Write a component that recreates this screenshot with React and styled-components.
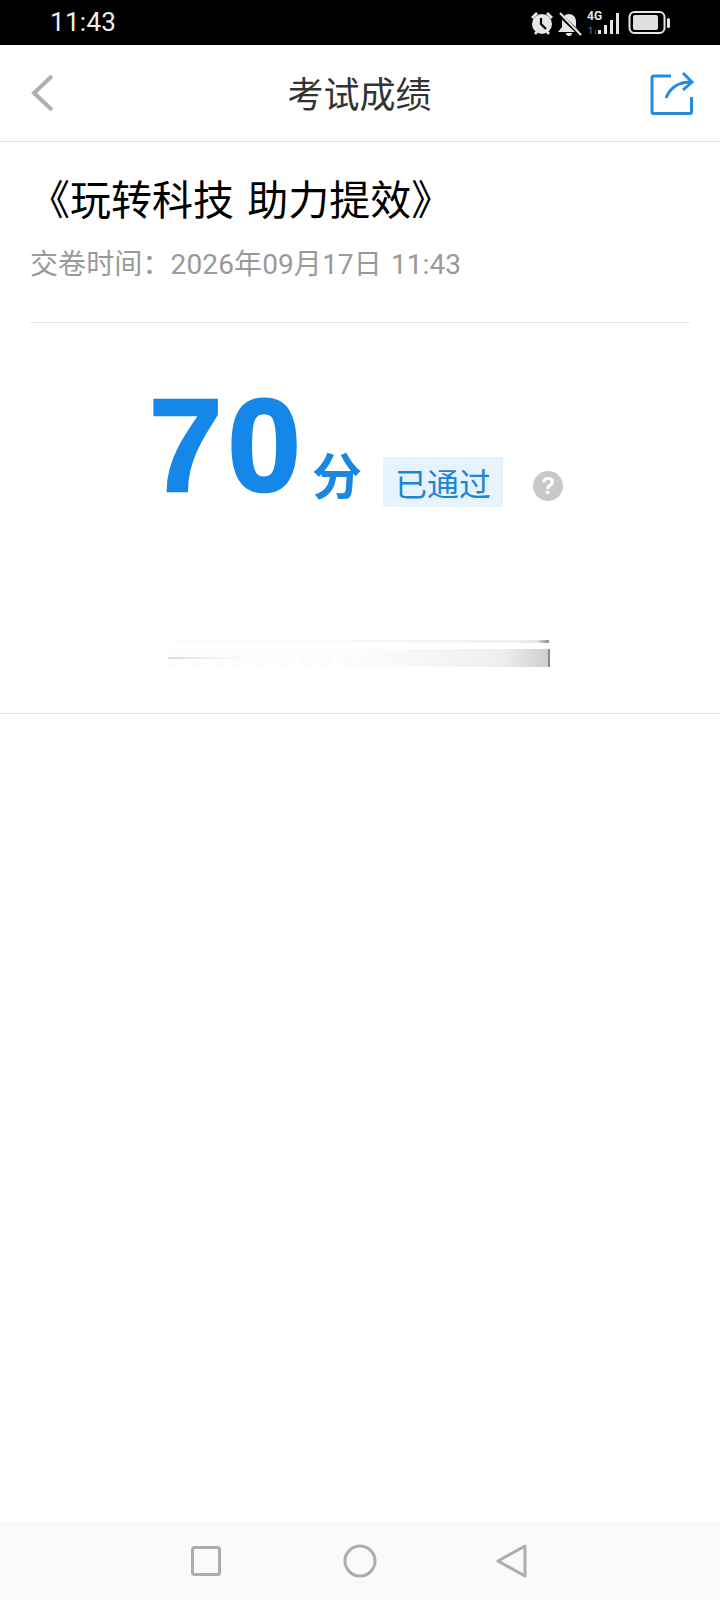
import React from "react";
import styled, { createGlobalStyle } from "styled-components";

const Global = createGlobalStyle`
  html, body { margin: 0; padding: 0; background: #fff; }
  body { font-family: "Noto Sans CJK SC", "Noto Sans", sans-serif; }
`;
const Page = styled.div`
  width: 720px; height: 1600px; display: flex; flex-direction: column; background: #fff; overflow: hidden;
`;
const StatusBar = styled.div`
  height: 45px; flex: none; background: #000; display: flex; align-items: center; justify-content: space-between;
  padding: 0 50px 0 50px; box-sizing: border-box;
`;
const Clock = styled.span`
  font: 400 26px/45px Roboto, sans-serif; color: #eee; letter-spacing: 0.3px; margin-top: -1px;
`;
const NavBar = styled.header`
  height: 97px; flex: none; box-sizing: border-box; border-bottom: 1px solid #e2e2e2;
  display: flex; align-items: center; justify-content: space-between; padding: 0 26px 0 29px;
`;
const NavTitle = styled.h1`
  margin: -2px 0 0 14px; font-size: 36px; line-height: 50px; font-weight: 400; color: #333;
`;
const Info = styled.section`
  margin: 0 30px; height: 181px; box-sizing: border-box; border-bottom: 1px solid #e6e6e6; flex: none; padding-top: 26px;
`;
const ExamTitle = styled.h2`
  margin: 0 0 0 -1px; font-size: 41px; line-height: 58px; font-weight: 400; color: #000; white-space: pre; word-spacing: 4px;
`;
const Submitted = styled.p`
  margin: 19px 0 0; font-size: 28px; line-height: 40px; color: #999; font-family: Roboto, "Noto Sans CJK SC", sans-serif;
  white-space: pre; letter-spacing: 0.12px; word-spacing: 2px;
`;
const ScoreArea = styled.section`
  height: 391px; flex: none; box-sizing: border-box; border-bottom: 1px solid #e2e2e2;
  display: flex; flex-direction: column;
`;
const ScoreRow = styled.div`
  display: flex; align-items: flex-end; height: 190px; padding-left: 149px; box-sizing: border-box;
`;
const Score = styled.span`
  font: 700 132px/100px "Liberation Sans", sans-serif; color: #1487e8; margin-bottom: 17px; letter-spacing: 5px;
  -webkit-text-stroke: 2.5px #1487e8; width: 156px; white-space: nowrap;
`;
const Unit = styled.span`
  font-size: 50px; line-height: 56px; font-weight: 700; color: #1a87e0; margin: 0 0 12px 7px;
`;
const Badge = styled.span`
  width: 120px; height: 50px; margin: 0 0 6px 21px; background: #e6f3fd; color: #1c85d5;
  font-size: 32px; display: flex; align-items: center; justify-content: center; line-height: 50px;
`;
const Help = styled.span`
  width: 30px; height: 30px; margin: 0 0 12px 30px; border-radius: 50%; background: #c8c8c8; color: #fff;
  font: 700 23px/30px "Liberation Sans", sans-serif; text-align: center;
`;
const Blur = styled.div`
  margin: 127px 0 0 168px; width: 384px; display: flex; flex-direction: column; gap: 6px;
`;
const BlurTop = styled.div`
  height: 3px; width: 381px;
  background: linear-gradient(90deg, #fdfdfd 0%, #f8f8f8 50%, #f2f2f2 90%, #e4e4e4 97%, #8a8a8a 100%);
`;
const BlurBottom = styled.div`
  height: 18px; width: 382px; box-sizing: border-box; border-right: 2px solid #8a8a8a;
  background:
    linear-gradient(90deg, #dcdcdc 0%, #eee 10%, #fbfbfb 20%, transparent 30%) 0 50% / 100% 2px no-repeat,
    repeating-linear-gradient(90deg, #fcfcfc 0 10px, #fefefe 10px 22px);
  &::after {
    content: ""; display: block; height: 100%;
    background: linear-gradient(90deg, transparent 45%, #f6f6f6 70%, #eeeeee 88%, #cfcfcf 100%);
  }
`;
const Spacer = styled.div` flex: 1; `;
const BottomBar = styled.nav`
  height: 78px; flex: none; background: #fafafa; display: flex; align-items: center; justify-content: center;
`;
const NavCell = styled.div`
  width: 152px; display: flex; justify-content: center; margin-left: ${(p) => p.$nudge || 0}px;
`;

function StatusIcons() {
  return (
    <svg width="140" height="28" viewBox="0 0 140 28" style={{ marginRight: -1 }}>
      <g fill="#e6e6e6">
        <circle cx="11" cy="15" r="10" />
        <path d="M0 8 L5 3 L7 5 L2 10Z M22 8 L17 3 L15 5 L20 10Z M3 24 L6 21 L8 22 L5 26Z M19 24 L16 21 L14 22 L17 26Z" />
      </g>
      <path d="M10 9 L10 15 L15 20" stroke="#000" strokeWidth="2.2" fill="none" />
      <path d="M38 5 a7 7 0 0 1 7 7 v6 l4 5 H27 l4-5 v-6 a7 7 0 0 1 7-7Z M35 24 h6 a3 3 0 0 1 -6 0Z" fill="#e6e6e6" />
      <path d="M28 5 L51 27" stroke="#000" strokeWidth="4" />
      <path d="M29 4 L50 26" stroke="#e6e6e6" strokeWidth="2" />
      <text x="56" y="11" fontSize="12" fontFamily="Roboto, sans-serif" fontWeight="700" fill="#e6e6e6">4G</text>
      <text x="57" y="25" fontSize="9" fontFamily="Roboto, sans-serif" fill="#888">1↓</text>
      <g fill="#e6e6e6">
        <rect x="67" y="21" width="3" height="4" />
        <rect x="73" y="16" width="3" height="9" />
        <rect x="79" y="11" width="3" height="14" />
        <rect x="85" y="4" width="3" height="21" />
      </g>
      <rect x="98.5" y="3" width="35" height="21" rx="5" fill="none" stroke="#e6e6e6" strokeWidth="2" />
      <rect x="102" y="6" width="25" height="15" rx="2" fill="#e0e0e0" />
      <rect x="136" y="9" width="3" height="10" rx="1.5" fill="#e6e6e6" />
    </svg>
  );
}

function BackIcon() {
  return (
    <svg width="26" height="40" viewBox="0 0 26 40">
      <path d="M23 3 L5 20 L23 37" fill="none" stroke="#b0b0b0" strokeWidth="4" />
    </svg>
  );
}
function ShareIcon() {
  return (
    <svg width="44" height="44" viewBox="0 0 44 44">
      <path d="M21 5 H3.5 a1.5 1.5 0 0 0 -1.5 1.5 V41 a1.5 1.5 0 0 0 1.5 1.5 H40 a1.5 1.5 0 0 0 1.5 -1.5 V26" fill="none" stroke="#2a8ad6" strokeWidth="3" />
      <path d="M16 27 C20 17 27 11 41 11 M33 2 L42 11 L33 19" fill="none" stroke="#2a8ad6" strokeWidth="3" />
    </svg>
  );
}
const G = "#adadad";

export default function App() {
  return (
    <Page>
      <Global />
      <StatusBar>
        <Clock>11:43</Clock>
        <StatusIcons />
      </StatusBar>
      <NavBar>
        <BackIcon />
        <NavTitle>考试成绩</NavTitle>
        <ShareIcon />
      </NavBar>
      <Info>
        <ExamTitle>《玩转科技 助力提效》</ExamTitle>
        <Submitted>交卷时间：2026年09月17日 11:43</Submitted>
      </Info>
      <ScoreArea>
        <ScoreRow>
          <Score>70</Score>
          <Unit>分</Unit>
          <Badge>已通过</Badge>
          <Help>?</Help>
        </ScoreRow>
        <Blur>
          <BlurTop />
          <BlurBottom />
        </Blur>
      </ScoreArea>
      <Spacer />
      <BottomBar>
        <NavCell $nudge={-2}>
          <svg width="32" height="32" viewBox="0 0 32 32"><rect x="2.5" y="2.5" width="27" height="27" rx="2" fill="none" stroke={G} strokeWidth="3" /></svg>
        </NavCell>
        <NavCell $nudge={2}>
          <svg width="34" height="34" viewBox="0 0 34 34"><circle cx="17" cy="17" r="15" fill="none" stroke={G} strokeWidth="3" /></svg>
        </NavCell>
        <NavCell>
          <svg width="32" height="34" viewBox="0 0 32 34"><path d="M2 17 L29 2 V32 Z" fill="none" stroke={G} strokeWidth="3" strokeLinejoin="round" /></svg>
        </NavCell>
      </BottomBar>
    </Page>
  );
}
